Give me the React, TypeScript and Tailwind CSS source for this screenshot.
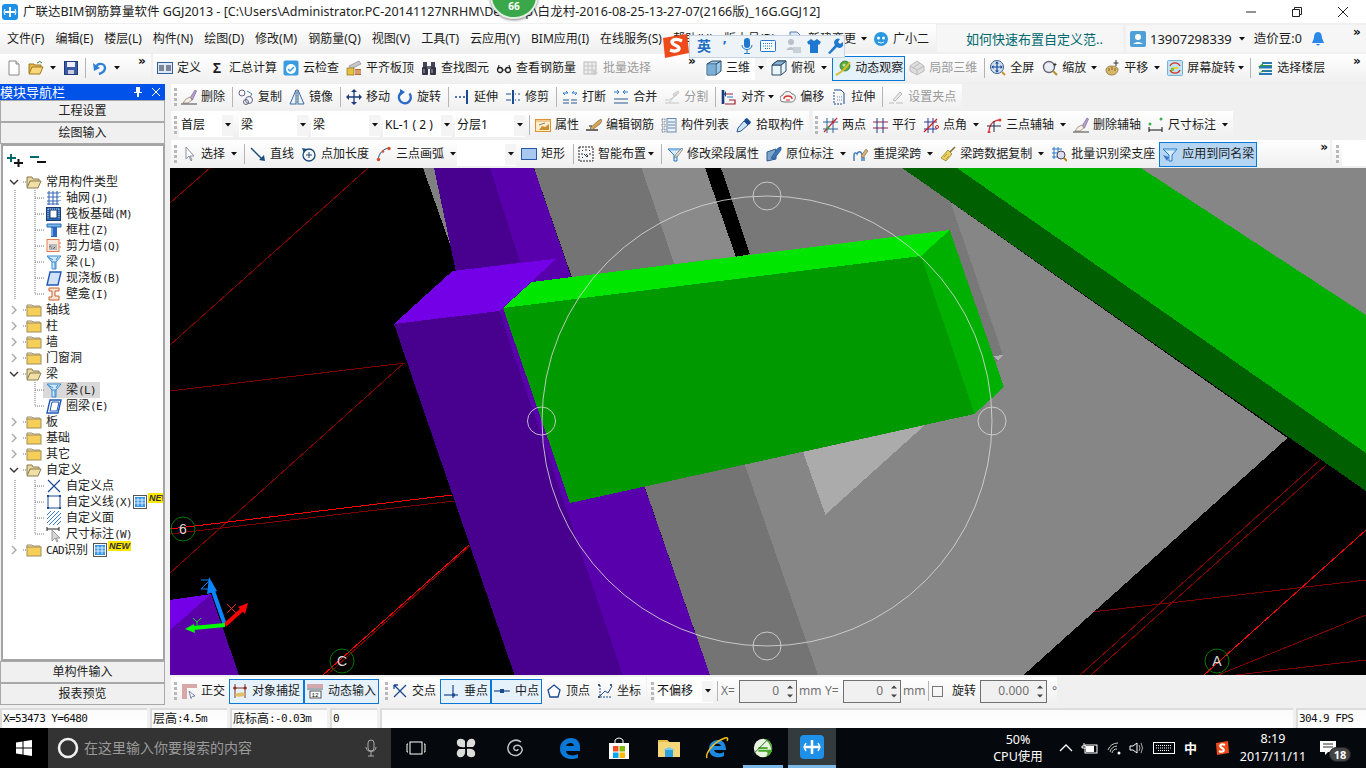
import React from "react";

const S = ({ children }: { children?: React.ReactNode }) => (
  <svg viewBox="0 0 16 16" className="w-4 h-4 shrink-0" fill="none">{children}</svg>
);

const funnel = (
  <>
    <path d="M1 3h14l-5 6v6H7V9z" fill="#d8ecfb" stroke="#2a78c8" />
    <path d="M3 4h10" stroke="#7ab8e8" />
  </>
);
const brush = (
  <>
    <path d="M9 9l5-8 1.500 1-4 9z" fill="#b8a0d0" stroke="#6a5a90" strokeWidth=".6" />
    <path d="M5 10l4-2 2 3-4 3H2z" fill="#f4f0e8" stroke="#8a7a60" strokeWidth=".7" />
    <path d="M0 15h16" stroke="#444" />
  </>
);

const ic: Record<string, React.ReactNode> = {
  newf: (<><path d="M3 1h7l3 3v11H3z" fill="#fff" stroke="#888" /><path d="M10 1v3h3" fill="#ddd" stroke="#888" /></>),
  open: (<><path d="M1 13V4h5l1 1h6v2" fill="#e8b848" stroke="#a07820" /><path d="M4 7h11l-3 7H1z" fill="#f8d878" stroke="#a07820" /><path d="M9 3q3-3 5 0" stroke="#2a7a2a" /></>),
  save: (<><rect x="1.500" y="1.500" width="13" height="13" fill="#3a5aa8" stroke="#223a78" /><rect x="4" y="2" width="8" height="5" fill="#eef" /><rect x="5" y="10" width="6" height="4" fill="#ccd" /></>),
  undo: (<><path d="M4 8c1-6 9-5 9 0 0 3-3 5-6 6" stroke="#2f80d8" strokeWidth="2.400" /><path d="M1 3l1 8 6-3z" fill="#2f80d8" /></>),
  def: (<><rect x=".5" y="2.500" width="15" height="11" fill="#dbe8f8" stroke="#3060a0" /><path d="M2 6h5M2 8h5M2 10h5M9 6h5M9 8h5M9 10h5" stroke="#223" /></>),
  cloud: (<><rect x=".5" y=".5" width="15" height="15" rx="2" fill="#3a9ce0" /><circle cx="8" cy="9" r="5" fill="#fff" /><path d="M5 9l2 2 4-4" stroke="#3a9ce0" strokeWidth="1.500" /></>),
  level: (<><path d="M3 6l10-5 2 3-10 5z" fill="#c8c8c8" stroke="#777" strokeWidth=".6" /><rect x="1" y="8" width="7" height="7" fill="#e8c040" stroke="#806010" strokeWidth=".6" /><rect x="9" y="9" width="6" height="6" fill="#b86830" /><path d="M9 11h6M9 13h6" stroke="#f0d0b0" /></>),
  binoc: (<><rect x="2" y="2" width="4" height="5" fill="#445" /><rect x="10" y="2" width="4" height="5" fill="#445" /><rect x="1" y="7" width="6" height="8" rx="1" fill="#334" /><rect x="9" y="7" width="6" height="8" rx="1" fill="#334" /><rect x="6" y="6" width="4" height="3" fill="#667" /><path d="M3 9v4M11 9v4" stroke="#aab" /></>),
  glass: (<><circle cx="4" cy="10" r="2.500" stroke="#222" strokeWidth="1.300" /><circle cx="12" cy="10" r="2.500" stroke="#222" strokeWidth="1.300" /><path d="M6.500 10h3M2 9l1-4M14 9l-1-4" stroke="#222" /></>),
  batchd: (<><rect x="1" y="2" width="12" height="12" fill="#eee" stroke="#bbb" /><path d="M1 6h12M1 10h12M5 2v12M9 2v12" stroke="#c4c4c4" /><path d="M9 9l6 4-3 1-1 2z" fill="#ccc" /></>),
  cube: (<><path d="M1 4l5-3h9v10l-5 4H1z" fill="#9cc8e8" stroke="#2a4a68" /><path d="M1 4h9v11M10 4l5-3" stroke="#2a4a68" /><rect x="1.500" y="4.500" width="8" height="10" fill="#7ab0d8" /></>),
  topv: (<><path d="M1 5l5-4h9v10l-5 4H1z" fill="#eaf4fb" stroke="#2a4a68" /><path d="M1 5h9v10M10 5l5-4" stroke="#2a4a68" /><path d="M6 1l-5 4h9l5-4z" fill="#8ab4d4" stroke="#2a4a68" /></>),
  orbit: (<><circle cx="10" cy="6" r="5" fill="#5aa83a" stroke="#2a6a20" strokeWidth=".7" /><path d="M1 15C5 13 10 10 15 2" stroke="#d8c030" strokeWidth="2" /><circle cx="9" cy="5" r="1.500" fill="#b8e8a0" /></>),
  local3: (<><path d="M1 6l7-5 7 5v5l-7 4-7-4z" fill="#ddd" stroke="#bbb" /><path d="M1 6l7 4 7-4M8 10v5M4 8l7-5" stroke="#bbb" /></>),
  full: (<><circle cx="7" cy="7" r="6.500" fill="#d0e0f0" stroke="#3a5a88" /><path d="M7 2v10M2 7h10" stroke="#1a4a98" strokeWidth="1.200" /><path d="M7 1.500l2 2H5zM7 12.500l2-2H5zM1.500 7l2-2v4zM12.500 7l-2-2v4z" fill="#1a4a98" /><path d="M12 12l3 3" stroke="#c89030" strokeWidth="2" /></>),
  zoom: (<><circle cx="7" cy="7" r="5.500" fill="#e8eef4" stroke="#667" strokeWidth="1.400" /><path d="M11 11l4 4" stroke="#b8942a" strokeWidth="2.200" /><path d="M13 3v3M11.500 4.500h3" stroke="#333" /></>),
  pan: (<><path d="M2 10c0-3 3-4 5-4s6 0 7 3c0 4-3 6-6 6-4 0-6-2-6-5z" fill="#d8b868" stroke="#806830" strokeWidth=".7" /><path d="M5 8v3M8 7v3M11 8v3" stroke="#806830" /><path d="M12 0v6M9.500 3h5" stroke="#333" /></>),
  srot: (<><rect x=".5" y=".5" width="15" height="15" rx="1" fill="#bfe3f6" stroke="#7ab0d0" /><path d="M3 6a5.500 5.500 0 0 1 10 0M13 10a5.500 5.500 0 0 1-10 0" stroke="#d83020" strokeWidth="1.300" /><path d="M5 7h6v2H5z" fill="#e8d040" /><path d="M4 8h3v3H4z" fill="#80c040" /></>),
  floors: (<><path d="M5 2h10v2H5zM2 6h13v2.500H2zM5 10h10v2H5zM2 13h13v2H2z" fill="#2a78b8" /><path d="M1 7l5-4v2h9v1H5v1zM1 13l4-2h10v-1" fill="#2a9a48" /></>),
  del: brush,
  copy: (<><circle cx="4" cy="4" r="3" stroke="#668" /><circle cx="11" cy="11" r="3.500" stroke="#668" /><circle cx="8" cy="13" r="2.500" stroke="#668" /><path d="M9 2l5 3-2 3" stroke="#48a" /></>),
  mirror: (<><path d="M7 1v14H1zM9 1v14h6z" stroke="#3a6aa0" fill="#eaf2fa" /><path d="M8 0v16" stroke="#888" strokeDasharray="2 1" /></>),
  move: (<><path d="M8 1v14M1 8h14" stroke="#1a3a78" strokeWidth="1.300" /><path d="M8 0l3 3H5zM8 16l3-3H5zM0 8l3-3v6zM16 8l-3-3v6z" fill="#1a3a78" /></>),
  rot: (<><path d="M12.500 4.500A6 6 0 1 1 5 3" stroke="#2a6ac8" strokeWidth="2.400" /><path d="M3 0v7l5-4z" fill="#2a6ac8" /></>),
  extend: (<><path d="M1 8h2M5 8h2M9 8h2" stroke="#1a4a90" strokeWidth="1.300" /><path d="M13 1v14" stroke="#1a4a90" strokeWidth="2" /></>),
  trim: (<><path d="M1 5h5M1 11h5M10 5h1M13 5h2M10 11h1M13 11h2" stroke="#1a4a90" /><path d="M8 1v14" stroke="#1a4a90" strokeWidth="2" /></>),
  brk: (<><path d="M1 4h5L4 2M1 4l2 2M15 4h-5l2-2M15 4l-2 2" stroke="#2a78c8" /><path d="M1 11h6M9 11h6M1 14h6M9 14h6" stroke="#2a5a90" strokeWidth="1.200" /></>),
  merge: (<><path d="M1 3h5L4 1M6 3L4 5M15 3h-5l2-2M10 3l2 2" stroke="#2a78c8" /><path d="M1 10h14M1 14h14" stroke="#2a5a90" strokeWidth="1.200" /></>),
  split: (<><path d="M1 14h14M1 11h4l8-5M5 14l8-10" stroke="#c8c8c8" /><path d="M9 5l5-3 1 2-5 3z" fill="#ddd" stroke="#bbb" strokeWidth=".6" /></>),
  alig: (<><path d="M2 1v14" stroke="#1a3a78" strokeWidth="2.600" /><path d="M4 15h10v-4H8M4 5h8" stroke="#a02030" strokeWidth="1.200" /><path d="M5 2l-2 3 2 3z" fill="#1a3a78" /><path d="M6 8h6" stroke="#2a78c8" /></>),
  offs: (<><path d="M4 13a3.500 3.500 0 0 1-1-7c1-4 7-5 9-1 3 0 4 3 3 5-1 3-3 3-4 3z" fill="#f4f4f4" stroke="#777" /><path d="M4 10c0-4 8-4 8 0" stroke="#d83030" strokeWidth="1.400" /><path d="M6 11h4" stroke="#d83030" /></>),
  stretch: (<><path d="M3 1h7l3 3v11" stroke="#1a4a90" /><path d="M3 3v12h9" stroke="#1a4a90" strokeDasharray="2 1" /><path d="M6 8h5M6 11h5" stroke="#68a" strokeDasharray="1 1" /></>),
  grip: (<><path d="M1 14h5M8 14h7" stroke="#bbb" /><path d="M5 11l7-8 2 2-7 7z" fill="#e8e8e8" stroke="#bbb" /></>),
  prop: (<><rect x=".5" y="2.500" width="15" height="12" fill="#fbeecf" stroke="#e09030" /><path d="M1 3h14v2H1z" fill="#f0c890" /><path d="M4 13l3-4 3 1 4-3v6z" fill="#c89030" /><path d="M4 8l6-2" stroke="#886" /></>),
  rebar: (<><path d="M0 13h12" stroke="#222" strokeWidth="1.300" /><path d="M4 11l8-7 3-2 1 2-2 3-8 6z" fill="#d8a850" stroke="#654" strokeWidth=".6" /><path d="M3 9h3" stroke="#222" /></>),
  list: (<><path d="M1 2h3v3H1zM1 7h3v3H1zM1 12h3v3H1z" stroke="#456" strokeDasharray="1 .6" strokeWidth=".8" /><rect x="6" y="1.500" width="9" height="13.500" fill="#eaf2fa" stroke="#68a" /><path d="M7 5h7M7 8h7M7 11h7" stroke="#68a" /></>),
  pick: (<><path d="M1 15l1-4 6-7 4 4-7 6z" fill="#cfe6f8" stroke="#2a5a90" /><path d="M9 2l2-1 4 4-1 2-2 1-4-4z" fill="#1a4a90" /></>),
  two: (<><path d="M1 5h15M1 12h15M5 1v15M11 1v15" stroke="#3060a0" /><path d="M2 15L15 1" stroke="#c03030" strokeWidth="1.200" /><circle cx="6" cy="11" r="1.500" fill="#40a040" /><circle cx="11" cy="5" r="1.500" fill="#c03030" /></>),
  para: (<><path d="M1 5h15" stroke="#a02040" /><path d="M1 11h15" stroke="#a02040" /><path d="M5 1v15M11 1v15" stroke="#1a3a88" /></>),
  angle: (<><path d="M1 5h13M1 12h13M5 1v15M10 1v15" stroke="#2a3a98" /><path d="M1 15L14 2" stroke="#d82020" strokeWidth="1.300" /><circle cx="14" cy="10" r="1.500" stroke="#d82020" /></>),
  arc3: (<><path d="M3 15C3 8 7 3 14 3" stroke="#d84040" strokeWidth="1.300" /><circle cx="14" cy="3" r="1.500" fill="#d84040" /><circle cx="3" cy="15" r="1.500" fill="#d84040" /><path d="M1 9h14M8 4v11" stroke="#1a2a48" /></>),
  dim: (<><path d="M1 10v5M14 10v5M1 13h13" stroke="#111" /><circle cx="2" cy="7" r="1.500" fill="#3ab048" /><circle cx="13" cy="2" r="1.500" fill="#3ab048" /></>),
  cursor: (<path d="M5 1v12l3-3 2 5 1-1-2-4h4z" fill="#fff" stroke="#8890a0" />),
  line: (<><path d="M1 2l12 12" stroke="#1a4a78" strokeWidth="1.400" /><path d="M15 15l-6-1 5-5z" fill="#1a4a78" /></>),
  plen: (<><circle cx="8" cy="9" r="6" stroke="#1a4a78" strokeWidth="1.300" /><path d="M8 6v6M5 9h6" stroke="#1a4a78" /><path d="M1 2l5 1-3 4z" fill="#1a4a78" /></>),
  arc: (<><path d="M2 14C3 7 7 3 13 2" stroke="#1a4a78" /><circle cx="2.500" cy="13.500" r="1.800" fill="#d85030" /><circle cx="7" cy="5.500" r="1.300" fill="#d85030" /><circle cx="13" cy="2.500" r="1.800" fill="#d85030" /></>),
  rect: (<rect x=".5" y="2.500" width="15" height="11" fill="#a8c8f0" stroke="#2a58a8" />),
  smart: (<><rect x="1" y="1" width="14" height="14" stroke="#222" strokeDasharray="2 1" /><path d="M4 4l1 1M8 3v2M12 4l-1 1M3 8h2M11 8h2M8 8l2 2-1 1-3-3" stroke="#234" /><path d="M4 12l1-1" stroke="#234" /></>),
  beam: (<>{funnel}<path d="M7 12l2-4 6-6 1 1-5 7z" fill="#ddd" stroke="#665" strokeWidth=".6" /></>),
  inplace: (<><path d="M1 6l9-3v10l-9 2z" fill="#7ea4cc" stroke="#2a5a90" /><path d="M5 12l7-10 3-1v3l-7 9z" fill="#3a78b8" stroke="#1a4a78" strokeWidth=".6" /></>),
  lift: (<><path d="M1 15V9c0-2 2-3 3-1 1-3 4-3 5 0v7" stroke="#3a78b8" strokeWidth="1.400" /><path d="M8 10l5-7 2 2-5 7z" fill="#d8b070" stroke="#765" strokeWidth=".6" /><path d="M11 15v-4" stroke="#3a78b8" strokeWidth="1.400" /></>),
  broom: (<><path d="M10 6l5-5" stroke="#8a6a30" strokeWidth="1.600" /><path d="M1 12l7-8 4 4-6 7z" fill="#e8d060" stroke="#8a7a20" strokeWidth=".7" /><path d="M4 11l3-3M6 13l3-3" stroke="#b89a30" /></>),
  batchb: (<><path d="M1 3h10M1 7h8M1 11h6M3 1v12M7 1v8" stroke="#2a78c8" /><circle cx="10" cy="9" r="4" fill="#dde" stroke="#445" /><path d="M13 12l3 3" stroke="#b88a20" strokeWidth="2" /></>),
  apply: (<>{funnel}<path d="M1 9l6 2-2 4z" fill="#3a78c8" /></>),
  ortho: (<><path d="M1 1h15v4H6v11H1z" fill="#d8a8a8" /><path d="M8 8l6 5-3 .5-1 2z" fill="#fff" stroke="#78a" /></>),
  snap: (<><path d="M3 1v14M13 1v14M1 5h14" stroke="#8a3020" /><circle cx="3" cy="5" r="1.500" fill="#8a3020" /><circle cx="13" cy="5" r="1.500" fill="#8a3020" /><path d="M3 12c2-3 9-3 10-1 0 3-9 4-10 1z" fill="#e0c068" /></>),
  dyn: (<><path d="M0 2h16M0 4h16" stroke="#c06060" /><path d="M0 6h16" stroke="#666" /><rect x="3" y="8" width="11" height="7" fill="#fff" stroke="#555" /><text x="4.500" y="14" fontSize="6" fill="#111" fontFamily="Liberation Mono">12</text></>),
  cross: (<path d="M2 2l12 12M14 2L2 14M6 2l-4 0M2 2l0 4" stroke="#1a4a90" strokeWidth="1.300" />),
  perp: (<><path d="M1 12h14" stroke="#1a4a90" strokeWidth="1.200" /><path d="M10 2v13" stroke="#1a4a90" strokeWidth="1.200" /><rect x="9" y="10.500" width="3" height="3" fill="#1a4a90" /></>),
  mid: (<><path d="M0 8h16" stroke="#1a4a90" strokeWidth="1.200" /><rect x="6" y="6" width="4" height="4" fill="#1a4a90" /></>),
  apex: (<path d="M8 2l6 5-2 7H4L2 7z" stroke="#1a4a90" strokeWidth="1.300" fill="#fff" />),
  coord: (<><path d="M3 2v12h12" stroke="#1a4a90" strokeDasharray="2 1" /><path d="M3 13l5-5 3 2 4-7" stroke="#1a4a90" /><circle cx="2" cy="2" r="1" fill="#123" /><circle cx="14" cy="2" r="1" fill="#123" /><circle cx="2" cy="14" r="1" fill="#123" /></>),
  t_grid: (<path d="M1 3h12M1 7h12M1 11h12M1 14h12M3 1v14M7 1v14M11 1v14M14 2v1M14 6v1M14 10v1" stroke="#3a6ab8" strokeWidth="1.100" />),
  t_raft: (<><rect x=".5" y="1.500" width="14" height="13" fill="#2a6ab0" stroke="#1a3a70" /><rect x="4" y="4" width="7" height="8" fill="#fff" stroke="#1a3a70" /><path d="M2 3v10M13 3v10M2 3h11" stroke="#bcd" strokeDasharray="1 1" /></>),
  t_col: (<><path d="M1 2h14v3H1z" fill="#7ab8e8" stroke="#2a68b8" /><path d="M5 5h6v10H5z" fill="#2a68c8" /><path d="M6 6v8" stroke="#bde" /></>),
  t_wall: (<><rect x="1" y="1.500" width="12" height="12" fill="#fbe8dc" stroke="#e08050" /><rect x="3" y="6" width="8" height="6" fill="#bbb" /><path d="M3 9l2-1M7 11l2-2M5 10h1" stroke="#666" /><path d="M13 5h2M13 9h2" stroke="#e08050" /></>),
  t_beam: (<><path d="M1 2h14l-5 6v7H6V8z" fill="#cfe8fa" stroke="#3a8ad0" /><path d="M2 3l5 3M6 8h4M12 3l-2 3M9 8v7" stroke="#3a8ad0" /></>),
  t_slab: (<><path d="M4 2h11l-3 13H1z" fill="#cfe2f8" stroke="#1f58b8" strokeWidth="1.400" /></>),
  t_niche: (<><path d="M3 2h10v3H9v5h4v4H3v-3h3V5H3z" fill="#fbe4d0" stroke="#c86030" /></>),
  t_ring: (<><path d="M4 2h11l-3 13H1z" fill="#fff" stroke="#1f58b8" strokeWidth="1.400" /><path d="M6 4h7l-2 9H4z" fill="#fff" stroke="#1f58b8" /></>),
  t_pt: (<path d="M2 2l12 12M14 2L2 14" stroke="#1a4a90" strokeWidth="1.200" />),
  t_ln: (<><rect x="2" y="2" width="12" height="12" stroke="#1a4a90" fill="#fff" /><path d="M1 1h2v2H1zM13 1h2v2h-2zM1 13h2v2H1zM13 13h2v2h-2z" fill="#1a4a90" /></>),
  t_hatch: (<path d="M1 5l4-4M1 9l8-8M1 13l12-12M3 15L15 3M7 15l8-8M11 15l4-4" stroke="#3a78c8" />),
  t_dim: (<><path d="M1 1v4M13 1v4M1 3h12" stroke="#222" /><path d="M6 4v11l3-3 2 4 1-1-2-3h4z" fill="#d8d8d8" stroke="#999" /></>),
};

const Ico = ({ n }: { n: string }) => <S>{ic[n]}</S>;

const Caret = ({ m = "" }: { m?: string }) => (
  <svg viewBox="0 0 6 4" className={`w-[6px] h-1 shrink-0 ${m}`}><path d="M0 0h6L3 3.500z" fill="#111" /></svg>
);

const Sep = ({ m = "" }: { m?: string }) => <div className={`w-px h-[20px] bg-[#b4b4b4] shrink-0 ${m}`} />;

const Grip = ({ m = "" }: { m?: string }) => (
  <div className={`flex flex-col gap-[2px] shrink-0 ${m}`}>
    <i className="block w-[3px] h-[3px] bg-[#b8b8b8]" />
    <i className="block w-[3px] h-[3px] bg-[#b8b8b8]" />
    <i className="block w-[3px] h-[3px] bg-[#b8b8b8]" />
    <i className="block w-[3px] h-[3px] bg-[#b8b8b8]" />
  </div>
);

const More = ({ m = "" }: { m?: string }) => (
  <span className={`w-[10px] shrink-0 self-start mt-[1px] text-[12px] leading-3 font-bold text-[#111] font-['DejaVu_Sans',sans-serif] ${m}`}>»</span>
);

const T = ({ n, t, m = "", dis = false }: { n: string; t: string; m?: string; dis?: boolean }) => (
  <div className={`flex items-center shrink-0 whitespace-nowrap ${m} ${dis ? "text-[#9a9a9a]" : "text-[#1c1c1c]"}`}>
    <Ico n={n} />
    <span className="ml-1">{t}</span>
  </div>
);

const Box = ({ m = "", w, children }: { m?: string; w: string; children: React.ReactNode }) => (
  <div className={`flex items-center h-[25px] border-[1.500px] border-[#0a78d7] bg-[#e5f1fb] shrink-0 whitespace-nowrap ${w} ${m}`}>{children}</div>
);

const Combo = ({ t, w, m = "" }: { t: string; w: string; m?: string }) => (
  <div className={`flex items-center justify-between h-[23px] bg-white shrink-0 pl-[2px] text-[#111] ${w} ${m}`}>
    <span className="whitespace-nowrap overflow-hidden">{t}</span>
    <span className="flex items-center justify-center w-[11px] h-[21px] bg-[#f4f4f4] shrink-0"><Caret /></span>
  </div>
);

const Spin = ({ v, w, m = "" }: { v: string; w: string; m?: string }) => (
  <div className={`flex items-center justify-end h-[23px] border-[1.500px] border-[#707070] bg-[#f0f0f0] shrink-0 text-[#707070] ${w} ${m}`}>
    <span className="mr-[7px]">{v}</span>
    <span className="flex flex-col gap-[5px] mr-[2px] w-[8px]">
      <svg viewBox="0 0 8 4" className="w-2 h-1"><path d="M1 3.500L4 .5l3 3z" fill="#444" /></svg>
      <svg viewBox="0 0 8 4" className="w-2 h-1"><path d="M1 .5L4 3.500l3-3z" fill="#444" /></svg>
    </span>
  </div>
);

const bar = "flex items-center bg-gradient-to-b from-white to-[#efefef]";
const mono = "text-[11px] tracking-[-.6px] font-['DejaVu_Sans_Mono',monospace]";

const menu = ["文件(F)", "编辑(E)", "楼层(L)", "构件(N)", "绘图(D)", "修改(M)", "钢筋量(Q)", "视图(V)", "工具(T)", "云应用(Y)", "BIM应用(I)", "在线服务(S)", "帮助(H)", "版本号(B)"];

const Chev = ({ open }: { open?: boolean }) =>
  open ? (
    <svg viewBox="0 0 10 10" className="w-[10px] h-[10px] shrink-0"><path d="M1 3l4 4 4-4" stroke="#333" strokeWidth="1.400" fill="none" /></svg>
  ) : (
    <svg viewBox="0 0 10 10" className="w-[10px] h-[10px] shrink-0"><path d="M3 1l4 4-4 4" stroke="#a8a8a8" strokeWidth="1.400" fill="none" /></svg>
  );

const Folder = ({ open }: { open?: boolean }) => (
  <svg viewBox="0 0 16 14" className="w-4 h-[14px] shrink-0">
    {open ? (
      <>
        <path d="M1 12V2h5l1 2h6v2" fill="#e8d8a0" stroke="#8a7a50" />
        <path d="M4 6h11l-3 7H1z" fill="#f0e0a8" stroke="#8a7a50" />
      </>
    ) : (
      <>
        <path d="M1 3V2h5l1 1h7v2H1z" fill="#e8dcc0" stroke="#a09060" />
        <rect x="1" y="4" width="14" height="9" fill="#f5cf58" stroke="#a09060" />
      </>
    )}
  </svg>
);

const NewIcon = () => (
  <svg viewBox="0 0 14 14" className="w-[14px] h-[14px] shrink-0">
    <rect x=".5" y=".5" width="13" height="13" fill="#fff" stroke="#555" />
    <rect x="2" y="2" width="10" height="10" fill="#3a98e8" />
    <path d="M5 3v8M9 3v8M2 5h10M2 8h10" stroke="#fff" strokeWidth=".8" />
  </svg>
);

const NewTag = () => (
  <span className="self-start ml-[1px] mt-[-1px] h-[10px] px-[1px] bg-[#ffe600] text-[9px] leading-[10px] font-bold italic text-[#333] font-['Liberation_Sans',sans-serif]">NEW</span>
);

const Fold = ({ t, open }: { t: string; open?: boolean }) => (
  <div className="flex items-center h-4 pl-[6px] whitespace-nowrap">
    <Chev open={open} />
    <span className="w-[7px]" />
    <Folder open={open} />
    <span className="ml-1">{t}</span>
  </div>
);

const Leaf = ({ n, t, k, sel }: { n: string; t: string; k?: string; sel?: boolean }) => (
  <div className="flex items-center h-4 pl-[40px] whitespace-nowrap">
    <div className={`flex items-center h-4 pl-[3px] pr-[4px] ${sel ? "bg-[#d9d9d9]" : ""}`}>
      <Ico n={n} />
      <span className="ml-[4px]">
        {t}
        {k && <span className={mono}>{k}</span>}
      </span>
    </div>
  </div>
);

const Side = ({ t }: { t: string }) => (
  <div className="flex items-center justify-center h-[22px] bg-[#f0f0f0] border border-[#a8a8a8] text-[#222]">{t}</div>
);

const Cell = ({ w, children }: { w: string; children?: React.ReactNode }) => (
  <div className={`h-[20px] mr-[3px] shrink-0 border-t-2 border-l-2 border-[#dcdcdc] bg-gradient-to-b from-[#fbfbfb] to-white flex items-center pl-[1px] text-[11px] tracking-[-.6px] text-[#111] whitespace-nowrap font-['DejaVu_Sans_Mono','Noto_Sans_CJK_SC',monospace] ${w}`}>{children}</div>
);

const red = [
  [170, 203, 210, 168, 0], [170, 345, 368, 168, 0], [170, 391, 405, 363, 0], [170, 573, 404, 363, 0],
  [170, 529, 452, 495, 1], [170, 534, 454, 501, 0], [323, 675, 469, 545, 1], [327, 675, 470, 546, 0],
  [1080, 675, 1320, 460, 0], [1091, 675, 1326, 465, 0], [1092, 612, 1366, 580, 0], [1204, 675, 1366, 530, 1],
  [1218, 675, 1366, 615, 0], [1236, 675, 1366, 660, 0],
];

const Scene = () => (
  <svg viewBox="170 168 1196 507" className="block w-[1196px] h-[507px] bg-black" shapeRendering="crispEdges">
    {red.map((l, i) => (
      <line key={i} x1={l[0]} y1={l[1]} x2={l[2]} y2={l[3]} stroke={l[4] ? "#ff0000" : "#800000"} strokeWidth="1" />
    ))}
    <polygon points="423,168 434,168 469,270 459,270" fill="#808080" />
    <polygon points="534,168 641.500,168 818,675 710,675" fill="#747474" />
    <polygon points="641.500,168 902,168 1287.500,438 1023.500,675 818,675" fill="#868686" />
    <polygon points="721,168 902,168 950,201 1003,355 960,400 750,260" fill="#787878" />
    <polygon points="641.500,168 705,168 736,256 674,263" fill="#8a8a8a" />
    <polygon points="705,168 721,168 750,254 736,257" fill="#000" />
    <polygon points="1141,168 1366,168 1366,315" fill="#868686" />
    <polygon points="803,452 825.400,514.700 925,425" fill="#ababab" />
    <polygon points="994,356 1003,355 998,361" fill="#b0b0b0" />
    <polygon points="434,168 534,168 571,276 500,315" fill="#5900ad" />
    <polygon points="434,168 490,168 520,262 456,272" fill="#48008f" />
    <polygon points="499,311 556.500,258.700 571,276 710,675 622,675" fill="#5900ad" />
    <polygon points="394,324 499,311 622.700,675 514.500,675" fill="#48008f" />
    <polygon points="394,324 452.400,271 556.500,258.700 499,311" fill="#7300e6" />
    <polygon points="503,308 531.600,282 949.700,230 921,256" fill="#00e600" />
    <polygon points="503,308 921,256 974.500,414 570,503" fill="#009900" />
    <polygon points="921,256 949.700,230 1004,387 974.500,414" fill="#00b000" />
    <polygon points="957,168 1141,168 1366,315 1366,453" fill="#00b000" />
    <polygon points="902,168 957,168 1366,453 1366,491" fill="#005f00" />
    <polygon points="170,600 211,594 239,675 170,675" fill="#5a00a8" />
    <polygon points="170,600 211,594 170,630" fill="#7300e6" />
    <g stroke="#d8d8d8" strokeWidth="1" fill="none" shapeRendering="auto" opacity=".85">
      <circle cx="767" cy="421" r="225" />
      <circle cx="767" cy="196" r="14" />
      <circle cx="767" cy="646" r="14" />
      <circle cx="541.500" cy="421" r="14" />
      <circle cx="992" cy="421" r="14" />
    </g>
    <g shapeRendering="auto">
      <circle cx="183" cy="529" r="12" stroke="#007a00" fill="none" />
      <circle cx="342" cy="661" r="12" stroke="#007a00" fill="none" />
      <circle cx="1217" cy="661" r="12" stroke="#007a00" fill="none" />
      <g fill="#d8d8d8" fontSize="14" textAnchor="middle" fontFamily="Liberation Sans">
        <text x="183" y="534">6</text>
        <text x="342" y="666">C</text>
        <text x="1217" y="666">A</text>
      </g>
      <path d="M225 625L212 588" stroke="#0a84ff" strokeWidth="4" />
      <path d="M209 577l8 14-10 3z" fill="#0a84ff" />
      <path d="M225 625L244 608" stroke="#ff0000" strokeWidth="4" />
      <path d="M248 603l-3 11-7-7z" fill="#ff0000" />
      <path d="M225 625L193 628" stroke="#00ff00" strokeWidth="4" />
      <path d="M185 629l9-5 1 9z" fill="#00ff00" />
      <path d="M201 580h9l-9 9h9" stroke="#0a84ff" fill="none" />
      <path d="M227 604l9 9M236 604l-9 9" stroke="#ff2020" fill="none" />
      <path d="M193 618l4 4 4-4M197 622v4" stroke="#00e000" fill="none" />
    </g>
  </svg>
);

export default function App() {
  return (
    <div className="relative w-[1366px] h-[768px] overflow-hidden bg-[#f0f0f0] text-[12px] leading-4 text-[#1c1c1c] font-['Noto_Sans','Noto_Sans_CJK_SC',sans-serif]">
      {/* title bar */}
      <div className="flex items-center h-[23px] bg-white">
        <svg viewBox="0 0 16 16" className="w-4 h-4 ml-[2px] shrink-0">
          <rect width="16" height="16" rx="3" fill="#1e90e8" />
          <path d="M8 3v10M3 8h10" stroke="#fff" strokeWidth="2" />
          <path d="M3 5l-1 3 1 3M13 5l1 3-1 3" stroke="#fff" fill="none" />
        </svg>
        <span className="ml-[5px] whitespace-nowrap text-[12.500px] tracking-[.02px] text-[#222]">广联达BIM钢筋算量软件 GGJ2013 - [C:\Users\Administrator.PC-20141127NRHM\Desktop\白龙村-2016-08-25-13-27-07(2166版)_16G.GGJ12]</span>
        <div className="ml-auto flex items-center text-[#222]">
          <svg viewBox="0 0 12 12" className="w-3 h-3"><path d="M1 6h10" stroke="#222" /></svg>
          <svg viewBox="0 0 12 12" className="w-3 h-3 ml-[34px]"><path d="M1.500 3.500h7v7h-7zM3.500 3.500v-2h7v7h-2" stroke="#222" fill="none" /></svg>
          <svg viewBox="0 0 12 12" className="w-3 h-3 ml-[34px] mr-[17px]"><path d="M1 1l10 10M11 1L1 11" stroke="#222" /></svg>
        </div>
      </div>

      {/* menu bar */}
      <div className="flex items-center h-[31px]">
        <div className={`${bar} w-[936px] h-[29px] pl-[7px] whitespace-nowrap overflow-hidden`}>
          <div className="flex gap-[11px] w-[780px] shrink-0 overflow-hidden">
            {menu.map((m) => (<span key={m} className="shrink-0">{m}</span>))}
          </div>
          <svg viewBox="0 0 16 16" className="w-4 h-4 shrink-0"><path d="M3 1h7l3 3v11H3z" fill="#dbe8f8" stroke="#5a7aa8" /></svg>
          <span className="ml-[5px] shrink-0">新建变更</span>
          <Caret m="ml-[5px]" />
          <svg viewBox="0 0 16 16" className="w-4 h-4 shrink-0 ml-[6px]"><circle cx="8" cy="8" r="7" fill="#2a98e0" /><circle cx="5.500" cy="7" r="1.500" fill="#fff" /><circle cx="10.500" cy="7" r="1.500" fill="#fff" /><path d="M5 11q3 2 6 0" stroke="#fff" fill="none" /></svg>
          <span className="ml-1 shrink-0">广小二</span>
        </div>
        <div className="flex items-center w-[186px] h-[27px] ml-[1px] pl-[29px] bg-[#f6f6f6] text-[#00696f] text-[13px] whitespace-nowrap">如何快速布置自定义范..</div>
        <div className="flex items-center flex-1 h-[27px] ml-[3px] bg-[#f6f6f6] pl-[4px] whitespace-nowrap">
          <svg viewBox="0 0 16 16" className="w-4 h-4 shrink-0"><rect width="16" height="16" rx="2" fill="#4f9fd8" /><circle cx="8" cy="6" r="3" fill="#fff" /><path d="M3 13q5-4 10 0z" fill="#fff" /></svg>
          <span className="ml-[4px] text-[13px]">13907298339</span>
          <Caret m="ml-[7px]" />
          <span className="ml-[9px] text-[12.500px]">造价豆:0</span>
          <svg viewBox="0 0 16 16" className="w-4 h-4 ml-[8px] shrink-0"><path d="M8 1c3 0 4 3 4 6l2 5H2l2-5c0-3 1-6 4-6z" fill="#2a88e8" /><path d="M6 13q2 3 4 0z" fill="#2a88e8" /></svg>
          <More m="ml-auto mr-[3px]" />
        </div>
      </div>

      {/* toolbar 1 */}
      <div className="flex h-[30px]">
        <div className={`${bar} w-[151px] pl-[6px] pb-[2px]`}>
          <Ico n="newf" />
          <span className="ml-[6px]"><Ico n="open" /></span>
          <Caret m="ml-[6px]" />
          <span className="ml-[7px]"><Ico n="save" /></span>
          <Sep m="ml-[6px]" />
          <span className="ml-[6px]"><Ico n="undo" /></span>
          <Caret m="ml-[6px]" />
          <More m="ml-[18px]" />
        </div>
        <div className={`${bar} flex-1 ml-[2px] pl-[4px] pb-[2px]`}>
          <T n="def" t="定义" />
          <div className="ml-[8px] flex items-center shrink-0 whitespace-nowrap"><span className="w-4 text-center font-bold text-[14px] font-['Liberation_Sans',sans-serif]">Σ</span><span className="ml-1">汇总计算</span></div>
          <T n="cloud" t="云检查" m="ml-[6px]" />
          <T n="level" t="平齐板顶" m="ml-[7px]" />
          <T n="binoc" t="查找图元" m="ml-[7px]" />
          <T n="glass" t="查看钢筋量" m="ml-[7px]" />
          <T n="batchd" t="批量选择" m="ml-[7px]" dis />
          <More m="ml-[37px]" />
          <div className="flex items-center w-[62px] h-[24px] ml-[7px] pl-[1px] bg-white shrink-0">
            <T n="cube" t="三维" />
            <span className="flex items-center justify-center w-[12px] h-[24px] ml-auto bg-[#f4f4f4]"><Caret /></span>
          </div>
          <T n="topv" t="俯视" m="ml-[4px]" />
          <Caret m="ml-[6px]" />
          <Box m="ml-[5px]" w="w-[73px] pl-[2px]"><T n="orbit" t="动态观察" /></Box>
          <T n="local3" t="局部三维" m="ml-[4px]" dis />
          <Sep m="ml-[7px]" />
          <T n="full" t="全屏" m="ml-[5px]" />
          <T n="zoom" t="缩放" m="ml-[8px]" />
          <Caret m="ml-[5px]" />
          <T n="pan" t="平移" m="ml-[7px]" />
          <Caret m="ml-[6px]" />
          <T n="srot" t="屏幕旋转" m="ml-[7px]" />
          <Caret m="ml-[3px]" />
          <Sep m="ml-[6px]" />
          <T n="floors" t="选择楼层" m="ml-[6px]" />
          <More m="ml-auto mr-[3px]" />
        </div>
      </div>

      {/* body */}
      <div className="flex h-[623px]">
        <aside className="flex flex-col w-[165px] shrink-0 mr-[5px] pb-[2px]">
          <div className="flex items-center h-[16px] bg-[#0052e8] text-white text-[13px] whitespace-nowrap">
            模块导航栏
            <svg viewBox="0 0 12 12" className="w-3 h-3 ml-[67px]"><path d="M4 1h4v5h2v1H7v4H5V7H2V6h2z" fill="#fff" /></svg>
            <svg viewBox="0 0 12 12" className="w-3 h-3 ml-[6px]"><path d="M2 2l8 8M10 2l-8 8" stroke="#fff" /></svg>
          </div>
          <Side t="工程设置" />
          <Side t="绘图输入" />
          <div className="relative flex-1 ml-[1px] border-2 border-[#a4a4a4] bg-white overflow-hidden text-[#222]">
            <div className="flex items-center h-[28px] pl-[3px]">
              <svg viewBox="0 0 18 14" className="w-[18px] h-[14px]"><path d="M1 5h9M5 1v8" stroke="#00696f" strokeWidth="2" /><path d="M8 10h9M12.500 6v8" stroke="#111" strokeWidth="2" /></svg>
              <svg viewBox="0 0 18 14" className="w-[18px] h-[14px] ml-[5px]"><path d="M1 4h9" stroke="#00696f" strokeWidth="2" /><path d="M8 9h9" stroke="#111" strokeWidth="2" /></svg>
            </div>
            <Fold t="常用构件类型" open />
            <Leaf n="t_grid" t="轴网" k="(J)" />
            <Leaf n="t_raft" t="筏板基础" k="(M)" />
            <Leaf n="t_col" t="框柱" k="(Z)" />
            <Leaf n="t_wall" t="剪力墙" k="(Q)" />
            <Leaf n="t_beam" t="梁" k="(L)" />
            <Leaf n="t_slab" t="现浇板" k="(B)" />
            <Leaf n="t_niche" t="壁龛" k="(I)" />
            <Fold t="轴线" />
            <Fold t="柱" />
            <Fold t="墙" />
            <Fold t="门窗洞" />
            <Fold t="梁" open />
            <Leaf n="t_beam" t="梁" k="(L)" sel />
            <Leaf n="t_ring" t="圈梁" k="(E)" />
            <Fold t="板" />
            <Fold t="基础" />
            <Fold t="其它" />
            <Fold t="自定义" open />
            <Leaf n="t_pt" t="自定义点" />
            <div className="flex items-center h-4 pl-[43px] whitespace-nowrap">
              <Ico n="t_ln" />
              <span className="ml-[4px]">自定义线<span className={mono}>(X)</span></span>
              <span className="ml-[1px]"><NewIcon /></span>
              <NewTag />
            </div>
            <Leaf n="t_hatch" t="自定义面" />
            <Leaf n="t_dim" t="尺寸标注" k="(W)" />
            <div className="flex items-center h-4 pl-[6px] whitespace-nowrap">
              <Chev />
              <span className="w-[7px]" />
              <Folder />
              <span className="ml-1"><span className={mono}>CAD</span>识别</span>
              <span className="ml-[5px]"><NewIcon /></span>
              <NewTag />
            </div>
            <svg className="absolute left-0 top-0 w-[44px] h-[410px] pointer-events-none" fill="none">
              <path d="M12 44V154M32 44V148M32 52h10M32 68h10M32 84h10M32 100h10M32 116h10M32 132h10M32 148h10M20 36h3M20 164h3M20 180h3M20 196h3M20 212h3M20 228h3M20 276h3M20 292h3M20 308h3M20 324h3M20 404h3M32 236V260M32 244h10M32 260h10M12 334V394M32 334V388M32 340h10M32 356h10M32 372h10M32 388h10" stroke="#777" strokeDasharray="1 1" />
            </svg>
          </div>
          <Side t="单构件输入" />
          <Side t="报表预览" />
        </aside>

        <main className="flex flex-col w-[1196px]">
          <div className="flex h-[27px] items-start">
            <div className={`${bar} w-[791px] h-[26px] ml-px`}>
              <Grip m="ml-[3px]" />
              <T n="del" t="删除" m="ml-[4px]" />
              <Sep m="ml-[7px]" />
              <T n="copy" t="复制" m="ml-[5px]" />
              <T n="mirror" t="镜像" m="ml-[7px]" />
              <Sep m="ml-[7px]" />
              <T n="move" t="移动" m="ml-[5px]" />
              <T n="rot" t="旋转" m="ml-[7px]" />
              <Sep m="ml-[7px]" />
              <T n="extend" t="延伸" m="ml-[5px]" />
              <T n="trim" t="修剪" m="ml-[7px]" />
              <Sep m="ml-[7px]" />
              <T n="brk" t="打断" m="ml-[5px]" />
              <T n="merge" t="合并" m="ml-[7px]" />
              <T n="split" t="分割" m="ml-[7px]" dis />
              <Sep m="ml-[7px]" />
              <T n="alig" t="对齐" m="ml-[5px]" />
              <Caret m="ml-[3px]" />
              <T n="offs" t="偏移" m="ml-[6px]" />
              <T n="stretch" t="拉伸" m="ml-[7px]" />
              <Sep m="ml-[7px]" />
              <T n="grip" t="设置夹点" m="ml-[5px]" dis />
            </div>
          </div>

          <div className="flex h-[29px] items-start">
            <div className={`${bar} w-[638px] h-[28px] ml-px`}>
              <Grip m="ml-[3px]" />
              <Combo t="首层" w="w-[54px]" m="ml-[2px]" />
              <Combo t="梁" w="w-[69px]" m="ml-[6px]" />
              <Combo t="梁" w="w-[69px]" m="ml-[3px]" />
              <Combo t="KL-1 ( 2 )" w="w-[69px]" m="ml-[3px]" />
              <Combo t="分层1" w="w-[70px]" m="ml-[3px]" />
              <Sep m="ml-[4px]" />
              <T n="prop" t="属性" m="ml-[5px]" />
              <T n="rebar" t="编辑钢筋" m="ml-[7px]" />
              <T n="list" t="构件列表" m="ml-[7px]" />
              <T n="pick" t="拾取构件" m="ml-[7px]" />
            </div>
            <div className={`${bar} w-[420px] h-[28px] ml-[4px]`}>
              <Grip m="ml-[2px]" />
              <T n="two" t="两点" m="ml-[4px]" />
              <T n="para" t="平行" m="ml-[6px]" />
              <T n="angle" t="点角" m="ml-[7px]" />
              <Caret m="ml-[6px]" />
              <T n="arc3" t="三点辅轴" m="ml-[7px]" />
              <Caret m="ml-[6px]" />
              <T n="del" t="删除辅轴" m="ml-[7px]" />
              <T n="dim" t="尺寸标注" m="ml-[7px]" />
              <Caret m="ml-[6px]" />
            </div>
          </div>

          <div className="flex h-[28px]">
            <div className={`${bar} w-[1160px] ml-px`}>
              <Grip m="ml-[3px]" />
              <T n="cursor" t="选择" m="ml-[4px]" />
              <Caret m="ml-[6px]" />
              <Sep m="ml-[7px]" />
              <T n="line" t="直线" m="ml-[5px]" />
              <T n="plen" t="点加长度" m="ml-[7px]" />
              <T n="arc" t="三点画弧" m="ml-[7px]" />
              <Caret m="ml-[6px]" />
              <Combo t="" w="w-[59px]" m="ml-[1px]" />
              <T n="rect" t="矩形" m="ml-[5px]" />
              <Sep m="ml-[8px]" />
              <T n="smart" t="智能布置" m="ml-[4px]" />
              <Caret m="ml-[2px]" />
              <Sep m="ml-[7px]" />
              <T n="beam" t="修改梁段属性" m="ml-[5px]" />
              <T n="inplace" t="原位标注" m="ml-[7px]" />
              <Caret m="ml-[6px]" />
              <T n="lift" t="重提梁跨" m="ml-[7px]" />
              <Caret m="ml-[6px]" />
              <T n="broom" t="梁跨数据复制" m="ml-[7px]" />
              <Caret m="ml-[6px]" />
              <T n="batchb" t="批量识别梁支座" m="ml-[7px]" />
              <Box m="ml-[4px] !bg-[#b5d6f3]" w="w-[98px] pl-[2px]"><T n="apply" t="应用到同名梁" /></Box>
              <More m="ml-[63px]" />
            </div>
            <div className={`${bar} flex-1 ml-[2px] pl-[4px]`}>
              <Grip />
              <div className="w-[24px] h-[24px] ml-[3px] bg-white" />
            </div>
          </div>

          <Scene />

          <div className="flex items-center h-[32px]">
            <div className={`${bar} w-[475px] h-[28px] ml-px`}>
              <Grip m="ml-[3px]" />
              <T n="ortho" t="正交" m="ml-[4px]" />
              <Box m="ml-[4px]" w="w-[75px] pl-[2px]"><T n="snap" t="对象捕捉" /></Box>
              <Box w="w-[75px] pl-[2px]"><T n="dyn" t="动态输入" m="[&>span]:ml-[5px]" /></Box>
              <Grip m="ml-[6px]" />
              <T n="cross" t="交点" m="ml-[4px]" />
              <Box m="ml-[4px]" w="w-[51px] pl-[2px]"><T n="perp" t="垂点" m="[&>span]:ml-[5px]" /></Box>
              <Box w="w-[51px] pl-[2px]"><T n="mid" t="中点" m="[&>span]:ml-[5px]" /></Box>
              <T n="apex" t="顶点" m="ml-[4px]" />
              <T n="coord" t="坐标" m="ml-[7px]" />
            </div>
            <div className={`${bar} w-[410px] h-[28px] ml-[1px] text-[#707070]`}>
              <Grip m="ml-[4px]" />
              <Combo t="不偏移" w="w-[58px]" m="ml-[1px]" />
              <Sep m="ml-[4px]" />
              <span className="ml-[3px] w-[16px] shrink-0">X=</span>
              <Spin v="0" w="w-[58px]" m="ml-[2px]" />
              <span className="ml-[2px] w-[24px] shrink-0">mm</span>
              <span className="ml-[2px] w-[16px] shrink-0">Y=</span>
              <Spin v="0" w="w-[58px]" m="ml-[2px]" />
              <span className="ml-[2px] w-[24px] shrink-0">mm</span>
              <Sep m="ml-[1px]" />
              <div className="w-[11px] h-[11px] ml-[3px] border border-[#777] shrink-0" />
              <span className="ml-[9px] text-[#1c1c1c] shrink-0">旋转</span>
              <Spin v="0.000" w="w-[67px]" m="ml-[4px]" />
              <span className="ml-[5px] shrink-0">°</span>
            </div>
          </div>
        </main>
      </div>

      {/* status bar */}
      <div className="flex items-end h-[21px]">
        <Cell w="w-[147px]">X=53473 Y=6480</Cell>
        <Cell w="w-[77px]"><span className="text-[12px] tracking-normal">层高</span>:4.5m</Cell>
        <Cell w="w-[97px]"><span className="text-[12px] tracking-normal">底标高</span>:-0.03m</Cell>
        <Cell w="w-[47px]">0</Cell>
        <Cell w="w-[913px]" />
        <Cell w="w-[70px] !mr-0">304.9 FPS</Cell>
      </div>

      {/* taskbar */}
      <div className="flex items-center h-[40px] bg-[#05090d] text-white">
        <div className="flex items-center justify-center w-[48px] h-full bg-black">
          <svg viewBox="0 0 16 16" className="w-4 h-4"><path d="M0 2.500l6.500-1v6H0zM7.500 1.300L16 0v7.500H7.500zM0 8.500h6.500v6l-6.500-1zM7.500 8.500H16V16l-8.500-1.300z" fill="#fff" /></svg>
        </div>
        <div className="flex items-center w-[343px] h-full bg-[#333333] text-[14px] text-[#9a9a9a]">
          <svg viewBox="0 0 22 22" className="w-[22px] h-[22px] ml-[9px] shrink-0"><circle cx="11" cy="11" r="9" stroke="#f0f0f0" strokeWidth="2.600" fill="none" /></svg>
          <span className="ml-[5px] whitespace-nowrap">在这里输入你要搜索的内容</span>
          <svg viewBox="0 0 12 18" className="w-3 h-[18px] ml-auto mr-[14px]"><rect x="3" y="1" width="6" height="11" rx="3" stroke="#aaa" fill="none" /><path d="M1 8c0 6 10 6 10 0M6 13v4M3 17h6" stroke="#aaa" fill="none" /></svg>
        </div>
        <div className="flex items-center h-full flex-1">
          <svg viewBox="0 0 20 14" className="w-5 h-[14px] ml-[15px] shrink-0"><rect x="4" y="1" width="12" height="12" stroke="#fff" fill="none" /><path d="M2 3H1v8h1M18 3h1v8h-1" stroke="#fff" fill="none" /></svg>
          <svg viewBox="0 0 22 22" className="w-[22px] h-[22px] ml-[29px] shrink-0"><path d="M10 10C4 11 1 8 2 4c1-3 6-3 8 0zM12 10c-1-6 2-9 6-8 3 1 3 6 0 8zM12 12c6-1 9 2 8 6-1 3-6 3-8 0zM10 12c1 6-2 9-6 8-3-1-3-6 0-8z" fill="#dcdcdc" /></svg>
          <svg viewBox="0 0 20 20" className="w-5 h-5 ml-[29px] shrink-0" fill="none"><path d="M15 4C10 0 3 3 2 9c-1 6 5 10 10 8 4-2 6-6 2-9-3-2-7 0-6 3 1 2 4 2 4 0" stroke="#c4c4c4" strokeWidth="1.500" /></svg>
          <svg viewBox="0 0 22 22" className="w-[22px] h-[22px] ml-[33px] shrink-0"><path d="M20 14H7c0 4 7 6 12 3v4c-8 3-18 0-18-9C1 5 6 1 12 1c6 0 9 4 9 9v4zM7 9h8c0-4-7-4-8 0z" fill="#0a78d8" /></svg>
          <svg viewBox="0 0 24 24" className="w-6 h-6 ml-[26px] shrink-0"><path d="M2 7h20v16H2z" fill="#fff" /><path d="M8 7V4q4-4 8 0v3" stroke="#fff" fill="none" /><rect x="6" y="10" width="5.500" height="5.500" fill="#f25022" /><rect x="12.500" y="10" width="5.500" height="5.500" fill="#7fba00" /><rect x="6" y="16.500" width="5.500" height="5.500" fill="#00a4ef" /><rect x="12.500" y="16.500" width="5.500" height="5.500" fill="#ffb900" /></svg>
          <svg viewBox="0 0 24 22" className="w-6 h-[22px] ml-[26px] shrink-0"><path d="M1 3h9l2 2h11v15H1z" fill="#f5d678" /><path d="M1 3h9l2 2H1z" fill="#e8bc4a" /><path d="M8 13h8v7H8z" fill="#2aa0e0" /><path d="M6 13l6-3 6 3z" fill="#7ccaf0" /></svg>
          <svg viewBox="0 0 24 24" className="w-6 h-6 ml-[24px] shrink-0"><path d="M21 14H9c1 4 7 4 10 2v4c-6 3-15 1-15-7C4 7 9 4 13 4c5 0 8 4 8 10zM9 10h7c-1-3-6-3-7 0z" fill="#1c8ae0" /><path d="M2 22C0 18 8 6 20 2c3-1 3 1 2 3" stroke="#f0c020" strokeWidth="1.500" fill="none" /></svg>
          <div className="flex items-end justify-center h-full w-[40px] ml-[14px] shrink-0 border-b-[3px] border-[#7ab8e8]">
            <svg viewBox="0 0 24 24" className="w-[22px] h-[22px] mb-[6px]"><circle cx="12" cy="12" r="10" fill="#e8f4e0" /><path d="M12 2a10 10 0 0 1 10 10 10 10 0 0 1-8 10c4-3 4-6 0-6H7v-2h14C20 7 16 3 12 2z" fill="#46a828" /><path d="M7 11h10v2H7z" fill="#46a828" /><path d="M2 18L18 2" stroke="#1a5a18" /></svg>
          </div>
          <div className="flex items-center justify-center h-full w-[48px] ml-[5px] shrink-0 bg-[#343b3f] border-b-[3px] border-[#7ab8e8]">
            <svg viewBox="0 0 24 24" className="w-6 h-6"><rect width="24" height="24" rx="4" fill="#1e90e8" /><path d="M12 5v14M5 12h14" stroke="#fff" strokeWidth="2.500" /><path d="M6 8l-2 4 2 4M18 8l2 4-2 4" stroke="#fff" strokeWidth="1.500" fill="none" /></svg>
          </div>
          <div className="flex flex-col items-center w-[70px] ml-[147px] shrink-0 text-[12.500px] leading-[17px] whitespace-nowrap">
            <span>50%</span>
            <span>CPU使用</span>
          </div>
          <svg viewBox="0 0 14 8" className="w-[14px] h-2 ml-[6px] shrink-0"><path d="M1 7l6-6 6 6" stroke="#fff" strokeWidth="1.300" fill="none" /></svg>
          <svg viewBox="0 0 18 12" className="w-[18px] h-3 ml-[8px] shrink-0"><rect x="4" y="3" width="12" height="8" stroke="#fff" fill="none" /><rect x="5" y="4" width="8" height="6" fill="#fff" /><path d="M3 1v3M1 4h4v2H1z" stroke="#fff" /></svg>
          <svg viewBox="0 0 16 14" className="w-4 h-[14px] ml-[8px] shrink-0" fill="none"><path d="M1 9a11 11 0 0 1 10-7M3 11a8 8 0 0 1 7-6M5 12a5 5 0 0 1 5-4" stroke="#c8c8c8" /><circle cx="12" cy="12" r="1.500" fill="#fff" /></svg>
          <svg viewBox="0 0 16 14" className="w-4 h-[14px] ml-[6px] shrink-0" fill="none"><path d="M1 5h3l4-3v10L4 9H1z" stroke="#fff" /><path d="M10 4q2 3 0 6M12 2q3 5 0 10" stroke="#aaa" /></svg>
          <svg viewBox="0 0 22 12" className="w-[22px] h-3 ml-[8px] shrink-0" fill="none"><rect x=".5" y=".5" width="21" height="11" stroke="#fff" /><path d="M3 3.500h16M3 6h16M5 8.500h12" stroke="#fff" strokeDasharray="1 1" /></svg>
          <span className="ml-[9px] w-[14px] text-[13px] font-bold shrink-0">中</span>
          <svg viewBox="0 0 16 16" className="w-4 h-4 ml-[16px] shrink-0"><path d="M2 3l12-2 1 12-12 2z" fill="#ef4a1c" /><path d="M11 5C7 3 4 6 8 8c4 2 1 5-3 3" stroke="#fff" strokeWidth="2" fill="none" /></svg>
          <div className="flex flex-col items-center w-[70px] ml-[8px] shrink-0 text-[12.500px] leading-[18px] whitespace-nowrap">
            <span>8:19</span>
            <span>2017/11/11</span>
          </div>
          <div className="relative ml-[12px] shrink-0">
            <svg viewBox="0 0 16 14" className="w-4 h-[14px]"><path d="M0 0h16v11H8l-3 3v-3H0z" fill="#fff" /><path d="M3 3h10M3 6h10" stroke="#333" /></svg>
            <span className="absolute left-[9px] top-[6px] flex items-center justify-center w-[22px] h-[15px] rounded-full bg-[#444] border border-[#222] text-[11px] font-bold leading-none">18</span>
          </div>
        </div>
      </div>

      {/* floating badge */}
      <div className="absolute left-[490px] top-[-27px] flex items-end justify-center w-[48px] h-[46px] pb-[3px] rounded-full bg-[#3aa84a] shadow-[0_1px_3px_rgba(0,0,0,.5)] border-2 border-[#e4f0e4] text-white text-[10px] font-bold">66</div>

      {/* IME bar */}
      <div className="absolute left-[662px] top-[33px] flex items-center">
        <svg viewBox="0 0 28 26" className="w-7 h-[26px] relative z-10"><path d="M1 5l24-4 2 19-24 5z" fill="#ef4a1c" /><path d="M20 8C12 4 6 9 13 12c8 3 3 8-5 5" stroke="#fff" strokeWidth="3.400" fill="none" /></svg>
        <div className="flex items-center w-[156px] h-[23px] ml-[-1px] bg-[#eef3f8] border border-[#c4d4e4] text-[#1e6ec8] pl-[7px]">
          <span className="text-[14px] font-bold">英</span>
          <span className="ml-[12px] w-[4px] text-[14px] font-bold leading-3">’</span>
          <svg viewBox="0 0 12 16" className="w-3 h-4 ml-[14px]"><rect x="3" y="0" width="6" height="10" rx="3" fill="#1e78d0" /><path d="M1 7c0 6 10 6 10 0M6 12v3M3 15.500h6" stroke="#1e78d0" fill="none" /></svg>
          <svg viewBox="0 0 16 12" className="w-4 h-3 ml-[7px]"><rect x=".5" y=".5" width="15" height="11" rx="1" stroke="#1e78d0" fill="#fff" /><path d="M3 3.500h10M3 6h10M5 8.500h6" stroke="#1e78d0" strokeDasharray="1 1" /></svg>
          <svg viewBox="0 0 16 16" className="w-4 h-4 ml-[9px]"><circle cx="6" cy="4" r="3" fill="#b8c0c8" /><path d="M1 12q5-6 9 0z" fill="#b8c0c8" /><rect x="8" y="9" width="8" height="6" fill="#c8d0d8" /></svg>
          <svg viewBox="0 0 16 16" className="w-4 h-4 ml-[5px]"><path d="M5 1L1 4l2 3 1-1v9h8V6l1 1 2-3-4-3-3 2z" fill="#1e78d0" /></svg>
          <svg viewBox="0 0 16 16" className="w-4 h-4 ml-[5px]"><path d="M1 15l7-8a4 4 0 0 1 5-6l-2 3 2 2 3-2a4 4 0 0 1-6 5l-7 7z" fill="#1e78d0" /></svg>
        </div>
      </div>
    </div>
  );
}
